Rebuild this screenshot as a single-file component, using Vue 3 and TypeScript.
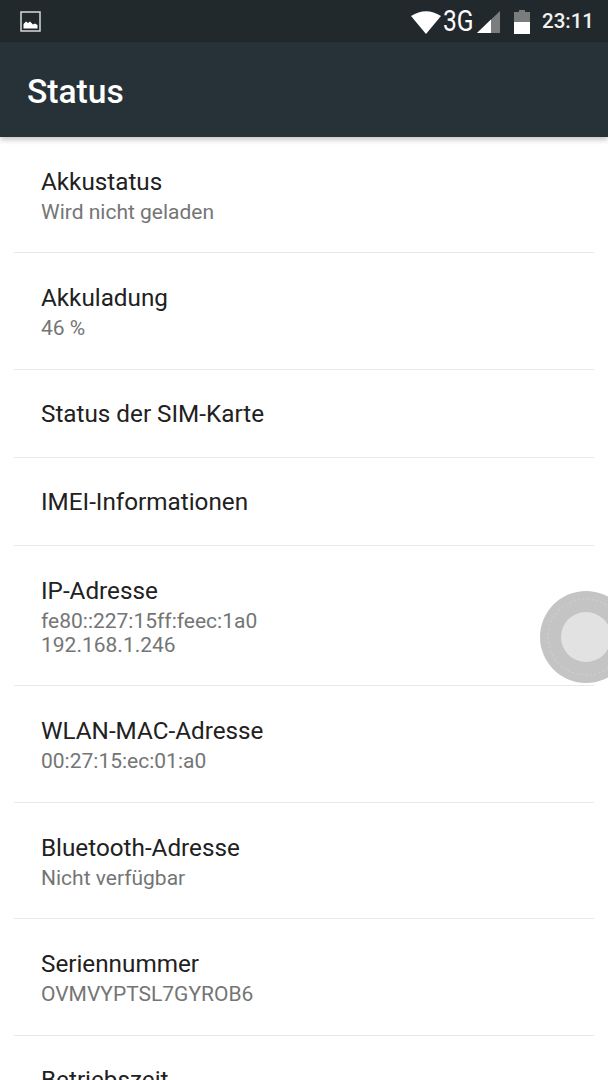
<script setup lang="ts">
interface StatusRow {
  title: string;
  lines: string[];
}

const rows: StatusRow[] = [
  { title: 'Akkustatus', lines: ['Wird nicht geladen'] },
  { title: 'Akkuladung', lines: ['46 %'] },
  { title: 'Status der SIM-Karte', lines: [] },
  { title: 'IMEI-Informationen', lines: [] },
  { title: 'IP-Adresse', lines: ['fe80::227:15ff:feec:1a0', '192.168.1.246'] },
  { title: 'WLAN-MAC-Adresse', lines: ['00:27:15:ec:01:a0'] },
  { title: 'Bluetooth-Adresse', lines: ['Nicht verfügbar'] },
  { title: 'Seriennummer', lines: ['OVMVYPTSL7GYROB6'] },
  { title: 'Betriebszeit', lines: [] },
];
</script>

<template>
  <div class="screen">
    <div class="statusbar">
      <svg width="21" height="21" viewBox="0 0 21 21">
        <rect x="1" y="1" width="19" height="19" fill="none" stroke="#d8d9d9" stroke-width="1.5" />
        <path d="M3.5 17.5V13L6 10.5 8 12l2-1.500 3 3 2-1 2.500 1.500v3.500z" fill="#fff" />
      </svg>
      <div class="status-right">
        <svg class="wifi" width="30" height="24" viewBox="0 0 30 24"><path d="M0 6Q15-3.500 30 6L15 24z" fill="#fff" /></svg>
        <span class="net">3G</span>
        <svg class="signal" width="23" height="22" viewBox="0 0 23 22">
          <path d="M23 0V22H0z" fill="#7a7d7e" />
          <path d="M14 8.500V22H0z" fill="#fff" />
        </svg>
        <svg class="battery" width="16" height="24" viewBox="0 0 16 24">
          <path d="M5 0h6v2h5v22H0V2h5z" fill="#7a7d7e" />
          <rect y="12" width="16" height="12" fill="#fff" />
        </svg>
        <span class="clock">23:11</span>
      </div>
    </div>
    <div class="toolbar">Status</div>
    <div class="list">
      <div v-for="row in rows" :key="row.title" :class="['row', { 'has-subs': row.lines.length }]">
        <div class="title">{{ row.title }}</div>
        <div v-if="row.lines.length" class="subs">
          <div v-for="line in row.lines" :key="line" class="sub">{{ line }}</div>
        </div>
      </div>
    </div>
    <svg class="touch" width="92" height="92" viewBox="0 0 92 92">
      <circle cx="46" cy="46" r="46" fill="#c4c4c4" />
      <circle cx="46" cy="46" r="38" fill="none" stroke="#cfcfcf" stroke-width="1.500" stroke-dasharray="1.500 3" />
      <circle cx="46" cy="46" r="34" fill="none" stroke="#c9c9c9" stroke-width="1" stroke-dasharray="1 4" />
      <circle cx="46" cy="46" r="25" fill="#e2e2e2" />
    </svg>
  </div>
</template>

<style scoped>
.screen {
  position: relative;
  width: 608px;
  height: 1080px;
  overflow: hidden;
  background: #fff;
  font-family: Roboto, "Liberation Sans", sans-serif;
}

.statusbar {
  height: 42px;
  background: #22292d;
  display: flex;
  align-items: center;
  justify-content: space-between;
  padding: 0 14px 0 20px;
  box-sizing: border-box;
}

.status-right {
  display: flex;
  align-items: center;
}

.wifi {
  margin-top: 2px;
}

.net {
  display: inline-block;
  width: 30px;
  margin-left: 2px;
  color: #fff;
  font-size: 30px;
  line-height: 30px;
  white-space: nowrap;
  transform: scaleX(0.82);
  transform-origin: left center;
}

.signal {
  margin-left: 4px;
  margin-top: 2px;
}

.battery {
  margin-left: 14px;
  margin-top: 1px;
}

.clock {
  color: #f1f2f2;
  font-size: 20.500px;
  font-weight: 500;
  margin-left: 12px;
}

.toolbar {
  height: 95px;
  background: #263238;
  color: #fff;
  font-size: 33.600px;
  font-weight: 500;
  line-height: 99px;
  padding-left: 27px;
  box-shadow: 0 3px 5px rgba(0, 0, 0, 0.22);
  position: relative;
}

.list {
  padding: 0 14px;
}

.row {
  border-bottom: 1px solid #e8e8e8;
  padding: 28px 0 27px 27px;
}

.row.has-subs {
  padding-top: 29px;
}

.row:first-child {
  padding-bottom: 26.400px;
}

.title {
  color: #212121;
  font-size: 24.260px;
  line-height: 32px;
}

.subs {
  margin-top: 2px;
  padding-bottom: 1.600px;
}

.sub {
  color: #757575;
  font-size: 21px;
  line-height: 24px;
}

.touch {
  position: absolute;
  left: 540px;
  top: 590.500px;
}
</style>
